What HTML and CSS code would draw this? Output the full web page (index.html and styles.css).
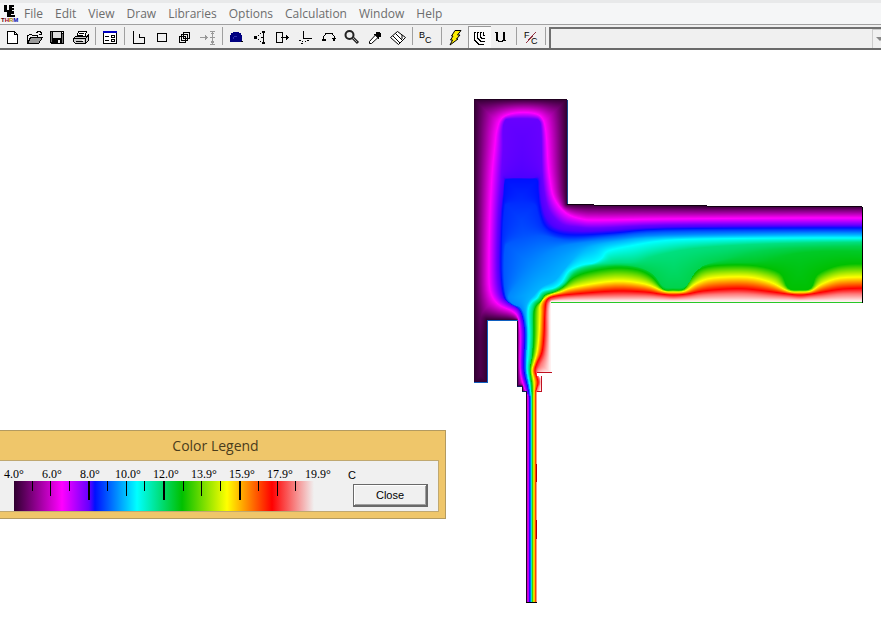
FILE: index.html
```html
<!DOCTYPE html>
<html lang="en">
<head>
    <meta charset="UTF-8">
    <meta name="viewport" content="width=device-width, initial-scale=1.0">
    <title>THERM</title>
    <link rel="stylesheet" href="styles.css">
</head>
<body>
    <header>
        <nav class="menubar">
            <svg class="app-icon" width="18" height="19" viewBox="0 0 18 19" shape-rendering="crispEdges">
                <path d="M2 0h3v5h3v2H2zM7 0h5v2h-2v1h2v2h-2v1h2v1H7zM5 7h7v2H9v1h4v2H5z" fill="#000"/>
                <text x="-1" y="17" class="app-name"><tspan fill="#500">T</tspan><tspan fill="#a00020">H</tspan><tspan fill="#a80">R</tspan><tspan fill="#00a">M</tspan></text>
            </svg>
            <a href="#">File</a>
            <a href="#">Edit</a>
            <a href="#">View</a>
            <a href="#">Draw</a>
            <a href="#">Libraries</a>
            <a href="#">Options</a>
            <a href="#">Calculation</a>
            <a href="#">Window</a>
            <a href="#">Help</a>
        </nav>

        <div class="toolbar">
            <button type="button" aria-label="New"><svg viewBox="0 0 16 16"><path d="M3.500 1.500h7l3 3v9h-10zM10.500 1.500v3h3" fill="#fff" stroke="#000"/></svg></button>
            <button type="button" aria-label="Open"><svg viewBox="0 0 16 16"><path d="M.5 13.500v-8h1l1-1h2l1 1h5v2" fill="#eee" stroke="#000"/><path d="M.5 13.500l3-6h12l-4 6z" fill="#999" stroke="#000"/><path d="M9 2.500h1v-1h3v1h1v2M12 4.500h3M14.500 2v3" fill="none" stroke="#000"/></svg></button>
            <button type="button" aria-label="Save"><svg viewBox="0 0 16 16"><path d="M0 1h14v13H1v-1H0z"/><path d="M3 2h8v6H3z" fill="#ddd"/><path d="M1 2h1v10H1zM12 4h1v9h-1z" fill="#777"/><path d="M8 10h2v3H8z" fill="#eee"/><path d="M12 2h1v1h-1z" fill="#fff"/></svg></button>
            <button type="button" aria-label="Print"><svg viewBox="0 0 16 16"><path d="M3.500 7.500l2-6h8l-2 6z" fill="#fff" stroke="#000"/><path d="M6 3.500h5M5 5.500h5" stroke="#000"/><path d="M.5 8.500l2-2h11l2-2v6l-3 3h-10l-2-2z" fill="#ccc" stroke="#000"/><path d="M1 8.500h11.500v4M12.500 8.500l3-3M3 11.500h7" fill="none" stroke="#000"/><path d="M9 10h2v1H9z" fill="#fff"/></svg></button>
            <span class="sep"></span>
            <button type="button" aria-label="Properties"><svg viewBox="0 0 16 16"><path d="M1.500 1.500h13v12h-13z" fill="#fff" stroke="#000"/><path d="M1 1h14v2H1z" fill="#0000c0"/><path d="M3 6.500h4M3 10.500h4" stroke="#000"/><path d="M9.500 5.500h3v2h-3zM9.500 9.500h3v2h-3z" fill="none" stroke="#000"/></svg></button>
            <span class="sep"></span>
            <button type="button" aria-label="Draw polygon"><svg viewBox="0 0 16 16"><path d="M2.500 1v12.500h11v-6h-5v-4" fill="none" stroke="#000"/></svg></button>
            <button type="button" aria-label="Draw rectangle"><svg viewBox="0 0 16 16"><path d="M3.500 3.500h9v8h-9z" fill="none" stroke="#000"/></svg></button>
            <button type="button" aria-label="Repeat"><svg viewBox="0 0 16 16"><path d="M6.500 2.500h6v6h-6zM4.500 4.500h6v6h-6zM2.500 6.500h6v6h-6z" fill="none" stroke="#000"/></svg></button>
            <button type="button" aria-label="Edit length" disabled><svg viewBox="0 0 16 16"><path d="M0 7.500h8M5.500 5v5M6.500 6v3M10 1.500h5M12.500 2v12M10 14.500h5M10 7.500h5M11.500 3v1M13.500 3v1M11.500 11v2M13.500 11v2" fill="none" stroke="#999"/></svg></button>
            <span class="sep"></span>
            <button type="button" aria-label="Tape measure"><svg viewBox="0 0 16 16"><path d="M4 2h6v1h2v2h1v6h1v1H1V5h1V3h2z" fill="#000080"/><path d="M5 6h3v1H5zM4 7h1v2H4z" fill="#3030b0"/><path d="M12 11h2v1h-2z"/></svg></button>
            <button type="button" aria-label="Move point"><svg viewBox="0 0 16 16"><path d="M11.500 2v12" stroke="#000"/><path d="M10 1h3v2h-3zM10 12h3v2h-3zM2 6h3v3H2z"/><path d="M6 5h1v1H6zM8 3h1v1H8zM6 9h1v1H6zM8 11h1v1H8zM9 7h2v1H9z"/></svg></button>
            <button type="button" aria-label="Move polygon"><svg viewBox="0 0 16 16"><path d="M1.500 2.500h6v10h-6zM6 7.500h8M11.500 5v5M12.500 6v3" fill="none" stroke="#000"/></svg></button>
            <button type="button" aria-label="Insert point"><svg viewBox="0 0 16 16"><path d="M5.500 1v7.500H14" fill="none" stroke="#000"/><path d="M1 10h2v1H1zM4 11h1v1H4zM7 11h1v1H7zM9 10h2v1H9zM3 13h2v1H3z"/></svg></button>
            <button type="button" aria-label="Rotate"><svg viewBox="0 0 16 16"><path d="M2.500 10V7l2-3 3-1h1l3 1 2 3v3" fill="none" stroke="#000"/><path d="M1 9h4v2H1zM11 8h4v1h-1v2h-2V9h-1z"/></svg></button>
            <button type="button" aria-label="Zoom"><svg class="smooth" viewBox="0 0 16 16"><circle cx="5.500" cy="5" r="4" fill="#eee" stroke="#222" stroke-width="2"/><path d="M9 8l5 5" stroke="#222" stroke-width="3"/><path d="M9 8l4 4" stroke="#aaa"/></svg></button>
            <button type="button" aria-label="Eyedropper"><svg class="smooth" viewBox="0 0 16 16"><path d="M9 2h4v1h1v4h-2v2h-1L7 5V4h2z"/><path d="M8 5.500l-5.500 6v2h2l6-5.500" fill="#fff" stroke="#000"/></svg></button>
            <button type="button" aria-label="Fill"><svg class="smooth" viewBox="0 0 16 16"><path d="M.5 7.500l7-6 8 6-7 7z" fill="#fff" stroke="#000"/><path d="M3 6l7 7M5.500 3.500l7 7M12 5v4" fill="none" stroke="#000"/></svg></button>
            <span class="sep"></span>
            <button type="button" aria-label="Boundary conditions"><svg viewBox="0 0 16 16"><text x="0" y="8">B</text><text x="6" y="13">C</text></svg></button>
            <span class="sep"></span>
            <button type="button" aria-label="Calculate"><svg class="smooth" viewBox="0 0 16 16"><path d="M7 .5h6L9.500 5H12L8.500 9H10L2 15 4.500 10H2.500L5 6H3.500z" fill="#ffef00" stroke="#000"/></svg></button>
            <button type="button" class="pressed" aria-label="Show results"><svg viewBox="0 0 16 16"><path d="M3.500 3v7l4 4h5M3 2.500h2M6.500 3v5l3 3h4M6 2.500h2M9.500 3v4l1 1h3M9 2.500h2M12.500 2v3h1" fill="none" stroke="#000"/></svg></button>
            <button type="button" aria-label="U-factors"><svg viewBox="0 0 16 16"><path d="M1 2h3v8h1v1h3v-1h1V2h2v8h1v1H9v1H4v-1H2V3H1z"/></svg></button>
            <span class="sep"></span>
            <button type="button" aria-label="Units"><svg viewBox="0 0 16 16"><path d="M3 13L13 2" stroke="#903040"/><text x="1" y="8">F</text><text x="8" y="14">C</text></svg></button>
            <span class="sep"></span>
            <div class="combo">
                <select aria-label="Material" disabled></select>
                <span class="combo-arrow"></span>
            </div>
        </div>
    </header>

    <main class="workspace">
        <canvas id="isotherms" width="390" height="506"></canvas>

        <section class="legend" aria-label="Color Legend">
            <h1>Color Legend</h1>
            <div class="legend-body">
                <div class="scale">
                    <div class="labels">
                        <span>4.0°</span><span>6.0°</span><span>8.0°</span><span>10.0°</span><span>12.0°</span><span>13.9°</span><span>15.9°</span><span>17.9°</span><span>19.9°</span>
                    </div>
                    <div class="ramp">
                        <i></i><i></i><i></i><i></i><i></i><i></i><i></i><i></i><i></i><i></i><i></i><i></i><i></i><i></i><i></i>
                    </div>
                </div>
                <div class="side">
                    <span>C</span>
                    <button type="button">Close</button>
                </div>
            </div>
        </section>
    </main>

    <script src="isotherms.js"></script>
</body>
</html>
```
FILE: styles.css
```css
* {
    margin: 0;
    padding: 0;
    box-sizing: border-box;
}

body {
    font-family: "Open Sans", "Noto Sans", sans-serif;
    background: #fff;
    min-height: 100vh;
    display: flex;
    flex-direction: column;
    overflow: hidden;
}

/* Menu */
.menubar {
    display: flex;
    align-items: center;
    gap: 12px;
    height: 24px;
    padding: 1px 0 0 2px;
    border-top: 3px solid #e8e9ea;
    background: #f5f6f7;
    font-size: 12px;
    line-height: 16px;
}

.menubar a {
    color: #6d6d6d;
    text-decoration: none;
}

.app-icon {
    margin-right: -8px;
    overflow: visible;
}

.app-name {
    font: bold 6px "Liberation Sans", sans-serif;
}

/* Toolbar */
.toolbar {
    display: flex;
    height: 26px;
    padding-left: 1px;
    border-top: 1px solid #a0a0a0;
    border-bottom: 2px solid #6a6a6a;
    background: #f0f0f0;
    overflow: hidden;
}

.toolbar button {
    width: 23px;
    height: 22px;
    margin-top: 1px;
    padding: 1px 3px 0;
    border: 0;
    background: none;
    flex: none;
}

.toolbar svg {
    display: block;
    width: 16px;
    height: 16px;
    shape-rendering: crispEdges;
}

.toolbar svg.smooth {
    shape-rendering: auto;
}

.toolbar text {
    font: 9px "Liberation Sans", sans-serif;
}

.toolbar .pressed {
    background: #fafafa;
    box-shadow: inset 1px 1px #999;
}

.sep {
    flex: none;
    width: 1px;
    height: 18px;
    margin: 2px 3px 0 2px;
    background: #a0a0a0;
}

.combo {
    display: flex;
    flex: 1;
    height: 22px;
    margin: 2px -8px 0 0;
    border: 2px solid #707070;
    border-bottom: 0;
}

.combo select {
    flex: 1;
    appearance: none;
    border: 0;
    background: #f0f0f0;
}

.combo-arrow {
    width: 15px;
    border: 1px solid #ccc;
    background: #f0f0f0;
    display: flex;
    align-items: center;
    justify-content: center;
}

.combo-arrow::before {
    content: "";
    border: 4px solid transparent;
    border-top-color: #888;
    border-bottom: 0;
}

/* Drawing area */
.workspace {
    position: relative;
    flex: 1;
    display: flex;
    justify-content: flex-end;
    align-items: flex-start;
    padding: 49px 17px 0 0;
}

canvas {
    display: block;
}

/* Color legend window, dragged partly past the left edge */
.legend {
    position: absolute;
    left: -16px;
    top: 380px;
    width: 462px;
    padding: 0 6px 6px 7px;
    border: 1px solid #b39a60;
    background: #efc66a;
}

.legend h1 {
    font-size: 14px;
    font-weight: normal;
    line-height: 29px;
    text-align: center;
    color: #4a3c1c;
}

.legend-body {
    display: flex;
    height: 52px;
    border: 1px solid #c0a870;
    background: #f0f0f0;
}

.scale {
    width: 342px;
    margin-left: 2px;
}

.labels {
    display: flex;
    padding-top: 6px;
    font: 12px/14px "Liberation Serif", serif;
}

.labels span {
    width: 38px;
    text-align: center;
}

.ramp {
    display: flex;
    justify-content: space-evenly;
    width: 300px;
    height: 30px;
    margin-left: 19px;
    background: linear-gradient(to right, #300030, #f0f 16%, #60f 25%, #0010ff 27%, #0ff 41%, #00c000 56%, #ff0 71%, #f00 86%, #f0f0f0);
}

.ramp i {
    width: 1px;
    height: 10px;
    background: #000;
}

.ramp i:nth-child(2n) {
    height: 15px;
}

.ramp i:nth-child(4n) {
    width: 2px;
    height: 19px;
}

.side {
    padding: 7px 0 0 16px;
    font: 11px/14px "Liberation Sans", sans-serif;
}

.side span {
    display: block;
    margin-left: -5px;
}

.side button {
    display: block;
    width: 75px;
    height: 23px;
    margin-top: 2px;
    font: 11px "Liberation Sans", sans-serif;
    background: #f0f0f0;
    border: 1px solid #696969;
    border-width: 1px 2px 2px 1px;
    box-shadow: inset 1px 1px #fff, inset -1px -1px #a0a0a0;
}
```
FILE: isotherms.js
```js
// Model coordinates of the canvas corner
const OX = 474, OY = 99;

const ramp = [
    [0, 48, 0, 48], [1, 255, 0, 255], [1.7, 104, 0, 255], [1.9, 76, 0, 255],
    [2, 0, 16, 255], [3, 0, 255, 255], [4, 0, 192, 0], [5, 255, 255, 0],
    [6, 255, 0, 0], [7, 255, 240, 240]
];

const outline = [
    [474,99],[567,99],[567,204],[594,204],[594,205],[707,205],[707,206],[862,206],
    [862,303],[551,303],[551,373],[537,373],[537,376],[541,376],[541,392],[536,392],
    [536,603],[526,603],[526,392],[522,392],[522,386],[517,386],[517,320],[487,320],
    [487,382],[474,382]
];

// Each isotherm runs from the right end of the slab, round the wall and
// down the frame. The warm side is below and to the right of it.
const isotherms = [
    { v: 0, sharp: true, pts: [[870,206],[707,206],[594,204],[567,204],[567,99],[474,99],[474,382],[487,382],
        [487,320],[517,320],[517,386],[522,386],[522,392],[526,392],[526,610]] },
    { v: 1, pts: [[870,218],[800,218],[665,219],[600,220],[582,219],[566,213],[554,198],[550,180],[548,163],[546,133],
        [542,118],[532,113],[515,113],[502,118],[497,130],[495,145],[492,175],[490,215],[489,260],[490,290],
        [498,304],[512,311],[518,318],[520,335],[520,368],[523,384],[527,396],[528,410],[528,610]] },
    { v: 1.7, pts: [[870,225],[800,225],[665,225],[600,228],[578,227],[562,224],[550,212],[545,196],[542,170],[541,130],
        [539,121],[533,119],[510,119],[505,121],[503,130],[503,150],[501,180],[498,220],[497,270],[500,294],
        [507,303],[517,309],[521,318],[523,335],[522,368],[526,386],[528,398],[529,410],[529,610]] },
    { v: 1.9, pts: [[870,226],[800,226],[665,227],[600,231],[575,231],[557,228],[547,219],[542,205],[540,190],[539,178],
        [530,178],[507,178],[504,179],[503,190],[500,220],[499,270],[502,295],[509,303],[518,309],[522,318],
        [524,335],[523,368],[527,387],[529,399],[529,412],[529,610]] },
    { v: 2, pts: [[870,228],[800,228],[665,229],[615,233],[575,235],[555,232],[545,225],[540,210],[538,190],[537,180],
        [530,179],[509,179],[505,182],[504,195],[502,220],[501,270],[504,296],[510,304],[519,309],[523,318],
        [525,335],[524,368],[528,388],[530,400],[530,412],[530,610]] },
    { v: 2.12, pts: [[870,229],[800,229],[665,230],[615,234],[575,237],[555,235],[543,227],[538,214],[535,205],
        [527,203],[515,203],[507,204],[505,208],[503,230],[502,270],[505,296],[511,304],[519,309],[523,318],
        [525,335],[524,368],[528,387],[530,400],[530,412],[530,610]] },
    { v: 2.3, pts: [[870,231],[800,231],[665,232],[615,236],[575,240],[558,239],[545,236],[535,236],
        [522,239],[509,243],[505,249],[504,275],[506,297],[512,304],[520,308],[524,318],
        [526,335],[525,368],[528,386],[530,400],[530,412],[530,610]] },
    { v: 2.5, pts: [[870,233],[800,233],[665,235],[615,239],[580,243],[560,247],[544,255],[530,268],
        [518,283],[509,295],[510,301],[515,305],[521,308],[525,318],[527,335],[526,368],[529,386],[531,400],
        [531,412],[531,610]] },
    { v: 2.68, pts: [[870,235],[800,235],[665,237],[620,241],[593,246],[578,254],[566,267],[555,280],[542,287],
        [534,295],[528,302],[526,311],[527,335],[526,368],[529,386],[531,400],[531,412],[531,610]] },
    { v: 3, pts: [[870,238],[800,238],[700,239],[660,241],[630,246],[608,251],[602,258],[594,263],[582,265],[569,271],
        [562,282],[554,288],[542,291],[537,298],[531,303],[528,312],[529,335],[528,355],[527,369],[530,386],[531,400],
        [531,412],[531,610]] },
    { v: 3.5, pts: [[870,242],[800,243],[740,245],[690,249],[655,256],[635,262],[615,263],[590,266],[574,272],
        [565,283],[556,289],[544,293],[539,299],[534,304],[532,314],[532,335],[531,355],[529,369],[531,386],
        [532,400],[532,412],[532,610]] },
    { v: 3.7, pts: [[870,246],[820,247],[780,249],[750,253],[725,259],[705,265],[694,274],[686,286],[673,288],
        [663,286],[653,274],[638,267],[615,265],[590,268],[574,274],[565,284],[556,290],[545,294],[540,300],
        [535,305],[533,314],[533,335],[532,355],[530,369],[531,386],[532,400],[532,412],[532,610]] },
    { v: 3.85, pts: [[870,252],[835,251],[800,253],[775,258],[755,262],[727,263],[703,266],[692,276],[685,288],
        [673,289],[663,288],[653,275],[638,268],[615,266],[589,270],[574,276],[565,285],[556,291],[546,294],
        [541,300],[536,305],[533,314],[533,335],[532,355],[530,369],[532,386],[532,400],[532,412],[532,610]] },
    { v: 4, pts: [[870,264],[850,264],[833,267],[817,275],[811,288],[800,290],[788,288],[780,273],[757,266],[727,265],
        [703,268],[691,278],[684,289],[673,290],[663,289],[652,277],[638,270],[615,268],[589,272],[573,278],[563,287],
        [554,292],[545,295],[541,301],[536,306],[534,314],[534,335],[533,352],[530,369],[532,386],[532,400],
        [532,412],[532,610]] },
    { v: 5, pts: [[870,277],[840,278],[822,284],[811,291],[800,292],[788,291],[770,282],[747,277],[713,278],[697,283],
        [685,291],[673,292],[663,291],[645,284],[615,281],[575,287],[560,292],[550,295],[543,300],[540,306],[540,314],
        [539,335],[537,352],[534,363],[532,371],[534,382],[534,400],[534,412],[534,610]] },
    { v: 6, pts: [[870,288],[843,289],[823,292],[811,294],[800,295],[788,294],[773,292],[747,289],[727,289],[703,291],
        [687,294],[673,295],[660,294],[645,292],[615,291],[575,294],[556,296],[547,300],[545,312],[544,335],[542,352],
        [537,363],[535,371],[538,382],[536,392],[536,412],[536,610]] },
    { v: 6.5, pts: [[870,294],[843,294],[823,296],[811,297],[800,298],[788,297],[773,296],[747,294],[727,294],[703,295],
        [687,297],[673,298],[660,297],[645,296],[615,296],[575,297],[556,299],[549,302],[547,312],[547,335],[545,355],
        [540,366],[537,372],[540,382],[537,392],[537,412],[537,610]] },
    { v: 7, sharp: true, pts: [[870,301],[551,301],[550,310],[550,372],[537,374],[541,378],[541,390],[538,394],[538,610]] }
];

// Catmull-Rom through the given points
function smooth(p) {
    const out = [];
    for (let i = 0; i < p.length - 1; i++) {
        const a = p[Math.max(i - 1, 0)], b = p[i], c = p[i + 1], d = p[Math.min(i + 2, p.length - 1)];
        for (let s = 0; s < 4; s++) {
            const t = s / 4;
            out.push([0, 1].map(k => 0.5 * (2 * b[k] + (c[k] - a[k]) * t
                + (2 * a[k] - 5 * b[k] + 4 * c[k] - d[k]) * t * t
                + (3 * b[k] - a[k] - 3 * c[k] + d[k]) * t * t * t)));
        }
    }
    out.push(p[p.length - 1]);
    return out;
}

function inside(poly, x, y) {
    let hit = false;
    for (let i = 0, j = poly.length - 1; i < poly.length; j = i++) {
        const a = poly[i], b = poly[j];
        if ((a[1] > y) !== (b[1] > y) && x < (b[0] - a[0]) * (y - a[1]) / (b[1] - a[1]) + a[0]) hit = !hit;
    }
    return hit;
}

function distance(line, x, y) {
    let best = Infinity;
    for (let i = 1; i < line.length; i++) {
        const ax = line[i - 1][0], ay = line[i - 1][1];
        const dx = line[i][0] - ax, dy = line[i][1] - ay;
        const t = Math.max(0, Math.min(1, ((x - ax) * dx + (y - ay) * dy) / (dx * dx + dy * dy || 1)));
        const ex = x - ax - t * dx, ey = y - ay - t * dy;
        best = Math.min(best, ex * ex + ey * ey);
    }
    return Math.sqrt(best);
}

function color(v) {
    let i = 1;
    while (i < ramp.length - 1 && v > ramp[i][0]) i++;
    const a = ramp[i - 1], b = ramp[i];
    const t = Math.max(0, Math.min(1, (v - a[0]) / (b[0] - a[0])));
    return [1, 2, 3].map(k => a[k] + (b[k] - a[k]) * t);
}

isotherms.forEach(c => {
    c.line = c.sharp ? c.pts : smooth(c.pts);
    c.region = c.line.concat([[870, 610]]);
});

function temperature(x, y) {
    let k = 0;
    while (k < isotherms.length && inside(isotherms[k].region, x, y)) k++;
    if (k === 0) return 0;
    if (k === isotherms.length) return 7;
    const lo = isotherms[k - 1], hi = isotherms[k];
    const a = distance(lo.line, x, y), b = distance(hi.line, x, y);
    return lo.v + (hi.v - lo.v) * a / (a + b || 1);
}

const canvas = document.getElementById("isotherms");
const ctx = canvas.getContext("2d");
const img = ctx.createImageData(canvas.width, canvas.height);

for (let py = 0; py < canvas.height; py++) {
    for (let px = 0; px < canvas.width; px++) {
        const x = px + OX + 0.5, y = py + OY + 0.5;
        if (!inside(outline, x, y)) continue;
        const o = (py * canvas.width + px) * 4;
        const c = color(temperature(x, y));
        img.data[o] = c[0];
        img.data[o + 1] = c[1];
        img.data[o + 2] = c[2];
        img.data[o + 3] = 255;
    }
}
ctx.putImageData(img, 0, 0);

// Boundary condition edges: x, y, width, height, color
[
    [474,99,93,1,"#200020"], [567,100,1,105,"#1a4a90"], [567,204,27,1,"#100010"],
    [594,205,113,1,"#100010"], [707,206,155,1,"#100010"], [862,207,1,96,"#000"],
    [551,302,311,1,"#28c828"], [487,320,1,62,"#1060c0"], [487,320,31,1,"#1060c0"],
    [474,382,14,1,"#1060c0"], [517,321,1,65,"#200030"], [517,386,6,1,"#102060"],
    [522,387,1,5,"#200030"], [522,391,5,1,"#102060"], [526,392,1,211,"#200030"],
    [526,602,11,1,"#000"], [537,372,15,1,"#c01020"], [541,376,1,16,"#c01020"],
    [537,391,5,1,"#c01020"], [536,392,1,210,"#f0a080"], [536,464,1,18,"#b00000"],
    [536,520,1,19,"#b00000"]
].forEach(([x, y, w, h, c]) => {
    ctx.fillStyle = c;
    ctx.fillRect(x - OX, y - OY, w, h);
});
```
